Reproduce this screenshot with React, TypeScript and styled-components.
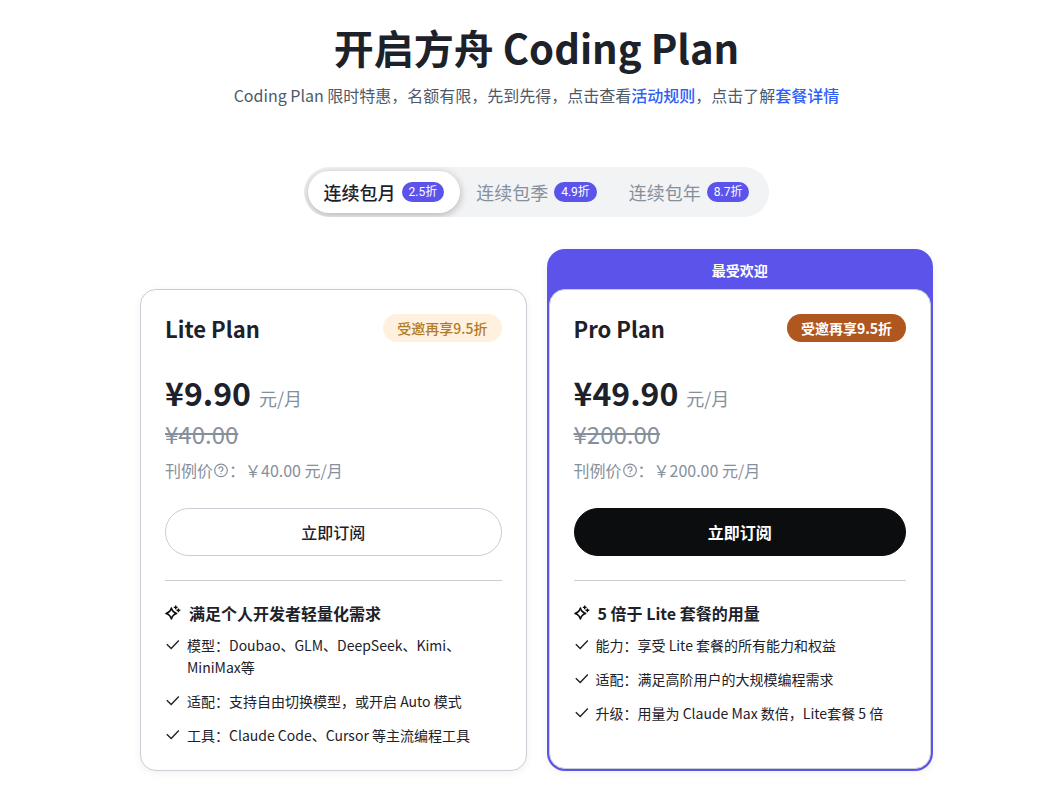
import React from "react";
import styled, { createGlobalStyle, css } from "styled-components";

const sans = `"Noto Sans CJK SC", "Noto Sans", sans-serif`;

const GlobalStyle = createGlobalStyle`
  *, *::before, *::after { box-sizing: border-box; }
  body { margin: 0; background: #fff; color: #1d2129; font-family: ${sans}; font-size: 14px; line-height: 22px; }
  h1, h2, h3, p, ul { margin: 0; padding: 0; }
  button { font-family: inherit; cursor: pointer; }
`;

const Page = styled.main`
  display: flex;
  flex-direction: column;
  align-items: center;
  padding: 19px 0 32px 32px;
`;

const Title = styled.h1`
  font-size: 40px;
  line-height: 56px;
  font-weight: 700;
  text-align: center;
`;

const Subtitle = styled.p`
  margin-top: 8px;
  font-size: 16px;
  line-height: 24px;
  color: #4e5969;
  text-align: center;
`;

const TextLink = styled.a`
  color: #2f5ff5;
  font-weight: 500;
  text-decoration: none;
`;

const Tabs = styled.div`
  display: flex;
  margin-top: 60px;
  padding: 4px;
  border-radius: 25px;
  background: #f2f3f5;
  overflow: hidden;
`;

const Tab = styled.button<{ $active: boolean }>`
  display: flex;
  align-items: center;
  gap: 6px;
  height: 42px;
  padding: 0 16px;
  border: 0;
  border-radius: 21px;
  background: transparent;
  color: #86909c;
  font-size: 18px;
  line-height: 26px;
  white-space: nowrap;
  ${({ $active }) =>
    $active &&
    css`
      background: #fff;
      color: #1d2129;
      font-weight: 500;
      box-shadow: 0 2px 8px rgba(0, 0, 0, 0.28);
    `}
`;

const Discount = styled.span`
  height: 20px;
  padding: 0 7px;
  border-radius: 10px;
  background: #5c53eb;
  color: #fff;
  font-family: Roboto, ${sans};
  font-size: 12px;
  font-weight: 400;
  line-height: 20px;
`;

const Plans = styled.section`
  display: grid;
  grid-template-columns: repeat(2, minmax(0, 1fr));
  gap: 20px;
  width: 100%;
  max-width: 1200px;
  margin-top: 32px;
  padding: 0 108px;
`;

const PlanColumn = styled.article<{ $featured: boolean }>`
  display: flex;
  flex-direction: column;
  border-radius: 18px;
  ${({ $featured }) =>
    $featured
      ? css`
          padding: 0 2px 2px;
          background: #5c53eb;
          box-shadow: 0 2px 8px rgba(0, 0, 0, 0.06);
        `
      : css`
          padding-top: 40px;
        `}
`;

const Ribbon = styled.p`
  height: 40px;
  color: #fff;
  font-size: 14px;
  font-weight: 700;
  line-height: 42px;
  text-align: center;
`;

const Card = styled.div<{ $featured: boolean }>`
  flex: 1;
  padding: 24px;
  border: 1px solid #c9cdd4;
  border-radius: 16px;
  background: #fff;
  box-shadow: ${({ $featured }) => ($featured ? "none" : "0 2px 8px rgba(0, 0, 0, 0.06)")};
`;

const CardHeader = styled.header`
  display: flex;
  justify-content: space-between;
  align-items: flex-start;
`;

const PlanName = styled.h2`
  font-size: 22px;
  line-height: 28px;
  font-weight: 700;
`;

const InviteTag = styled.span<{ $featured: boolean }>`
  padding: 0 14px;
  border-radius: 14px;
  font-size: 14px;
  line-height: 28px;
  font-weight: ${({ $featured }) => ($featured ? 700 : 500)};
  background: ${({ $featured }) => ($featured ? "#b0561f" : "#fff1de")};
  color: ${({ $featured }) => ($featured ? "#fff" : "#b27b26")};
`;

const PriceRow = styled.p`
  display: flex;
  align-items: baseline;
  gap: 8px;
  margin-top: 26px;
`;

const Price = styled.strong`
  font-size: 32px;
  line-height: 48px;
  font-weight: 700;
`;

const Unit = styled.span`
  font-size: 18px;
  line-height: 24px;
  color: #86909c;
`;

const OldPrice = styled.del`
  display: block;
  font-size: 24px;
  line-height: 36px;
  color: #86909c;
`;

const ListPrice = styled.p`
  display: flex;
  align-items: center;
  margin-top: 6px;
  font-size: 16px;
  line-height: 24px;
  color: #86909c;
`;

const Subscribe = styled.button<{ $featured: boolean }>`
  display: block;
  width: 100%;
  height: 48px;
  margin-top: 26px;
  border: 1px solid ${({ $featured }) => ($featured ? "#0c0d0e" : "#c9cdd4")};
  border-radius: 24px;
  background: ${({ $featured }) => ($featured ? "#0c0d0e" : "#fff")};
  color: ${({ $featured }) => ($featured ? "#fff" : "#1d2129")};
  font-size: 16px;
  line-height: 24px;
  font-weight: ${({ $featured }) => ($featured ? 700 : 500)};
`;

const Divider = styled.hr`
  height: 1px;
  margin: 24px 0 20px;
  border: 0;
  background: #c9cdd4;
`;

const FeatureTitle = styled.h3`
  display: flex;
  align-items: center;
  gap: 8px;
  font-size: 16px;
  line-height: 24px;
  font-weight: 700;
`;

const Features = styled.ul`
  display: grid;
  gap: 12px;
  margin-top: 9px;
  list-style: none;
`;

const Feature = styled.li`
  display: flex;
  align-items: flex-start;
  gap: 6px;
`;

const IconSlot = styled.svg`
  flex: none;
  width: 16px;
  height: 16px;
`;

const CheckSlot = styled(IconSlot)`
  height: 22px;
`;

function CheckIcon() {
  return (
    <CheckSlot viewBox="0 0 16 22" fill="none" stroke="currentColor" strokeWidth="1.4" aria-hidden="true">
      <path d="M1.8 10.2 L6.2 14.4 L13.8 6.6" />
    </CheckSlot>
  );
}

function SparkIcon() {
  return (
    <IconSlot viewBox="0 0 16 16" fill="none" stroke="#0c0d0e" strokeWidth="1.6" strokeLinejoin="round" aria-hidden="true">
      <path d="M6.4 3 C7 5.6 8.8 7.5 11.6 8.4 C8.8 9.2 7.1 11 6.4 13.9 C5.7 11 4 9.2 1 8.4 C4 7.5 5.8 5.6 6.4 3 Z" />
      <path d="M10.7 0.5 V4.3 M8.8 2.4 H12.6 M13.4 3.4 V7.2 M11.5 5.3 H15.3" strokeWidth="1.4" />
    </IconSlot>
  );
}

function HelpIcon() {
  return (
    <IconSlot viewBox="0 0 16 16" fill="none" stroke="currentColor" strokeWidth="1.2" role="img" aria-label="说明">
      <circle cx="8" cy="8.4" r="6.3" />
      <path d="M6 7.1 A2 2 0 1 1 8.9 8.6 Q8 9 8 10 M8 10.9 V12.2" />
    </IconSlot>
  );
}

const periods = [
  { label: "连续包月", discount: "2.5折" },
  { label: "连续包季", discount: "4.9折" },
  { label: "连续包年", discount: "8.7折" },
];

type Plan = {
  name: string;
  price: string;
  listPrice: string;
  summary: string;
  features: string[];
  ribbon?: string;
};

const plans: Plan[] = [
  {
    name: "Lite Plan",
    price: "9.90",
    listPrice: "40.00",
    summary: "满足个人开发者轻量化需求",
    features: [
      "模型：Doubao、GLM、DeepSeek、Kimi、MiniMax等",
      "适配：支持自由切换模型，或开启 Auto 模式",
      "工具：Claude Code、Cursor 等主流编程工具",
    ],
  },
  {
    name: "Pro Plan",
    price: "49.90",
    listPrice: "200.00",
    summary: "5 倍于 Lite 套餐的用量",
    features: [
      "能力：享受 Lite 套餐的所有能力和权益",
      "适配：满足高阶用户的大规模编程需求",
      "升级：用量为 Claude Max 数倍，Lite套餐 5 倍",
    ],
    ribbon: "最受欢迎",
  },
];

function PlanCard({ plan }: { plan: Plan }) {
  const featured = Boolean(plan.ribbon);
  return (
    <PlanColumn $featured={featured}>
      {plan.ribbon && <Ribbon>{plan.ribbon}</Ribbon>}
      <Card $featured={featured}>
        <CardHeader>
          <PlanName>{plan.name}</PlanName>
          <InviteTag $featured={featured}>受邀再享9.5折</InviteTag>
        </CardHeader>
        <PriceRow>
          <Price>¥{plan.price}</Price>
          <Unit>元/月</Unit>
        </PriceRow>
        <OldPrice>¥{plan.listPrice}</OldPrice>
        <ListPrice>
          刊例价
          <HelpIcon />
          ：￥{plan.listPrice} 元/月
        </ListPrice>
        <Subscribe type="button" $featured={featured}>
          立即订阅
        </Subscribe>
        <Divider />
        <FeatureTitle>
          <SparkIcon />
          {plan.summary}
        </FeatureTitle>
        <Features>
          {plan.features.map((text) => (
            <Feature key={text}>
              <CheckIcon />
              <span>{text}</span>
            </Feature>
          ))}
        </Features>
      </Card>
    </PlanColumn>
  );
}

export default function App() {
  const [period, setPeriod] = React.useState(0);
  return (
    <>
      <GlobalStyle />
      <Page>
        <Title>开启方舟 Coding Plan</Title>
        <Subtitle>
          Coding Plan 限时特惠，名额有限，先到先得，点击查看<TextLink href="#rules">活动规则</TextLink>
          ，点击了解<TextLink href="#details">套餐详情</TextLink>
        </Subtitle>
        <Tabs role="tablist">
          {periods.map((item, index) => (
            <Tab
              key={item.label}
              type="button"
              role="tab"
              aria-selected={index === period}
              $active={index === period}
              onClick={() => setPeriod(index)}
            >
              {item.label}
              <Discount>{item.discount}</Discount>
            </Tab>
          ))}
        </Tabs>
        <Plans>
          {plans.map((plan) => (
            <PlanCard key={plan.name} plan={plan} />
          ))}
        </Plans>
      </Page>
    </>
  );
}
